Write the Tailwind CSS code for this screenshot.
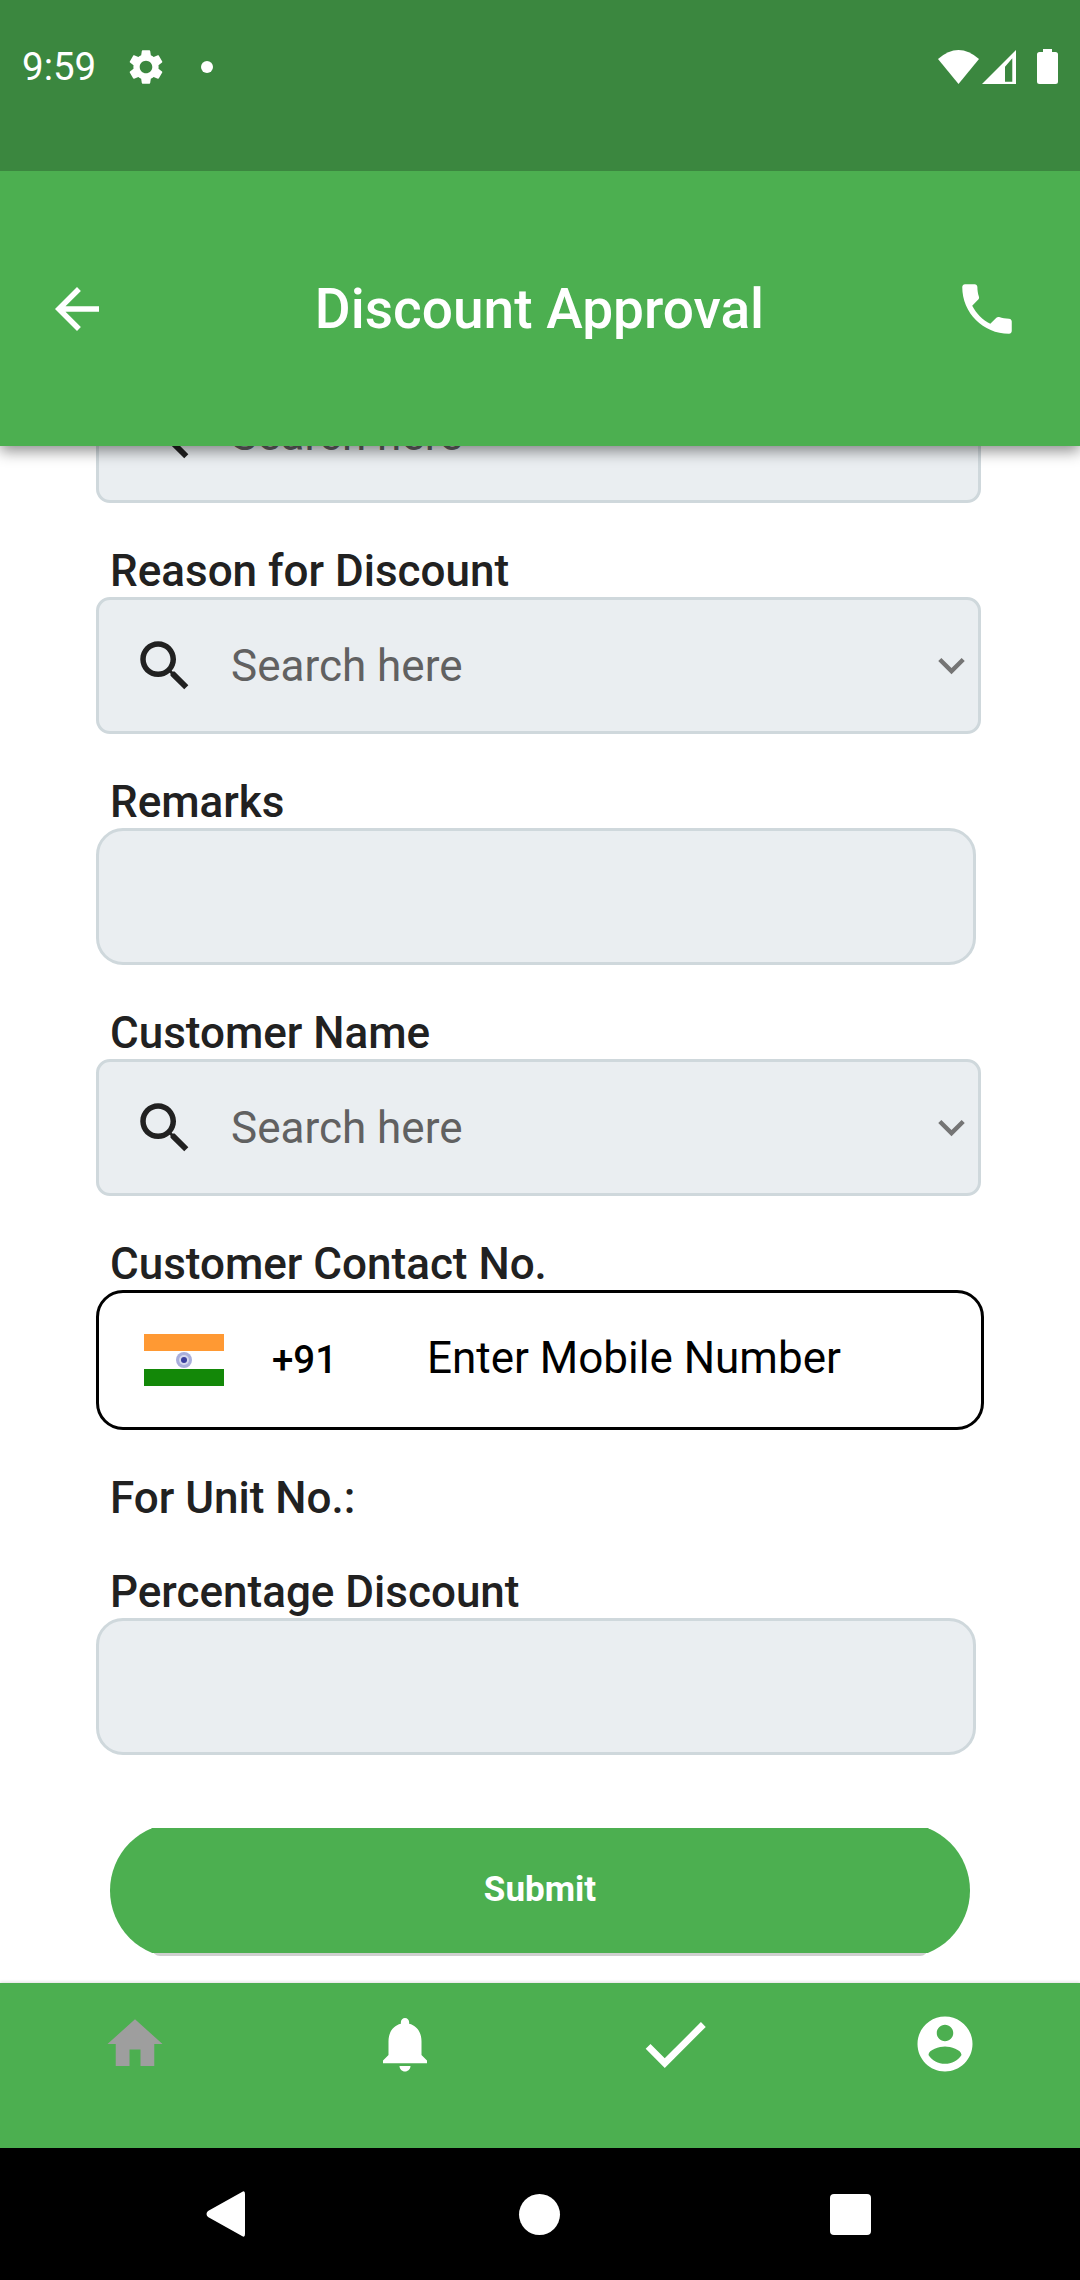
<!DOCTYPE html>
<html lang="en">
<head><meta charset="utf-8"/><title>Discount Approval</title><script src="https://cdn.jsdelivr.net/npm/@tailwindcss/browser@4"></script></head>
<body class="bg-white font-[family-name:Roboto,sans-serif]">
<div class="w-[1080px] h-[2280px] flex flex-col overflow-hidden">

<!-- status bar -->
<div class="h-[171px] shrink-0 bg-[#3b873f] text-white relative z-20 flex items-start pt-[49px]">
  <span class="ml-[22px] w-[96px] h-[36px] text-[38.5px] leading-[36px]">9:59</span>
  <svg class="ml-[7px] -mt-[3px] w-[42px] h-[42px]" viewBox="0 0 24 24" fill="#fff"><path d="M19.14 12.94c.04-.3.06-.61.06-.94 0-.32-.02-.64-.07-.94l2.03-1.58c.18-.14.23-.41.12-.61l-1.92-3.32c-.12-.22-.37-.29-.59-.22l-2.39.96c-.5-.38-1.03-.7-1.62-.94l-.36-2.54c-.04-.24-.24-.41-.48-.41h-3.84c-.24 0-.43.17-.47.41l-.36 2.54c-.59.24-1.13.57-1.62.94l-2.39-.96c-.22-.08-.47 0-.59.22L2.74 8.87c-.12.21-.08.47.12.61l2.03 1.58c-.05.3-.09.63-.09.94s.02.64.07.94l-2.03 1.58c-.18.14-.23.41-.12.61l1.92 3.32c.12.22.37.29.59.22l2.39-.96c.5.38 1.03.7 1.62.94l.36 2.54c.05.24.24.41.48.41h3.84c.24 0 .44-.17.47-.41l.36-2.54c.59-.24 1.13-.56 1.62-.94l2.39.96c.22.08.47 0 .59-.22l1.92-3.32c.12-.22.07-.47-.12-.61l-2.01-1.58zM12 15.6c-1.98 0-3.6-1.62-3.6-3.6s1.62-3.6 3.6-3.6 3.6 1.62 3.6 3.6-1.62 3.6-3.6 3.6z"/></svg>
  <span class="ml-[34px] mt-[12px] w-[12px] h-[12px] rounded-full bg-white"></span>
  <div class="ml-auto flex items-start pr-[22px] pt-px">
    <svg class="w-[41px] h-[34px]" viewBox="0 0 41 34" fill="#fff"><path d="M0 9Q20.5 -9 41 9L20.5 34Z"/></svg>
    <svg class="ml-[3px] w-[34px] h-[34px]" viewBox="0 0 34 34" fill="#fff"><path fill-rule="evenodd" d="M0 34L34 0V34ZM23 16.7V31.7H30.3V8.3Z"/></svg>
    <svg class="ml-[21px] w-[21px] h-[35px] -mt-px" viewBox="0 0 21 35" fill="#fff"><path d="M6 0H15V3H18.5Q21 3 21 5.5V32.5Q21 35 18.5 35H2.5Q0 35 0 32.5V5.5Q0 3 2.5 3H6Z"/></svg>
  </div>
</div>

<!-- app bar -->
<header class="h-[275px] shrink-0 bg-[#4caf50] text-white relative z-10 shadow-[0_5px_14px_rgba(0,0,0,0.45)] flex items-center pl-[44px] pr-[60px]">
  <svg class="w-[66px] h-[66px]" viewBox="0 0 24 24" fill="#fff"><path d="M20 11H7.83l5.59-5.59L12 4l-8 8 8 8 1.41-1.41L7.83 13H20v-2z"/></svg>
  <h1 class="flex-1 text-center pl-[15px] text-[55px] leading-[64px] font-medium">Discount Approval</h1>
  <svg class="w-[66px] h-[66px]" viewBox="0 0 24 24" fill="#fff"><path d="M6.62 10.79c1.44 2.83 3.76 5.14 6.59 6.59l2.2-2.2c.27-.27.67-.36 1.02-.24 1.12.37 2.33.57 3.57.57.55 0 1 .45 1 1V20c0 .55-.45 1-1 1-9.39 0-17-7.61-17-17 0-.55.45-1 1-1h3.5c.55 0 1 .45 1 1 0 1.25.2 2.45.57 3.57.11.35.03.74-.25 1.02l-2.2 2.2z"/></svg>
</header>

<!-- scrolled form -->
<main class="h-[1537px] shrink-0 overflow-hidden pl-[96px]">
  <div class="-mt-[80px] w-[885px] h-[137px] rounded-[14px] border-[3px] border-[#cfd8dc] bg-[#eaeef1] flex items-center text-[44px] text-[#616161]">
    <svg class="ml-[33px] w-[66px] h-[66px] text-[#212121]" viewBox="0 0 24 24" fill="currentColor"><path d="M15.5 14h-.79l-.28-.27C15.41 12.59 16 11.11 16 9.5 16 5.91 13.09 3 9.5 3S3 5.91 3 9.5 5.91 16 9.5 16c1.61 0 3.09-.59 4.23-1.57l.27.28v.79l5 4.99L20.49 19l-4.99-5zm-6 0C7.01 14 5 11.99 5 9.5S7.01 5 9.5 5 14 7.01 14 9.5 11.99 14 9.5 14z"/></svg>
    <span class="ml-[33px]">Search here</span>
  </div>

  <div class="h-[94px] pl-[14px] text-[44px] leading-[48px] font-medium text-[#212121] flex items-end pb-[2px]">Reason for Discount</div>
  <div class="w-[885px] h-[137px] rounded-[14px] border-[3px] border-[#cfd8dc] bg-[#eaeef1] flex items-center text-[44px] text-[#616161]">
    <svg class="ml-[33px] w-[66px] h-[66px] text-[#212121]" viewBox="0 0 24 24" fill="currentColor"><path d="M15.5 14h-.79l-.28-.27C15.41 12.59 16 11.11 16 9.5 16 5.91 13.09 3 9.5 3S3 5.91 3 9.5 5.91 16 9.5 16c1.61 0 3.09-.59 4.23-1.57l.27.28v.79l5 4.99L20.49 19l-4.99-5zm-6 0C7.01 14 5 11.99 5 9.5S7.01 5 9.5 5 14 7.01 14 9.5 11.99 14 9.5 14z"/></svg>
    <span class="ml-[33px]">Search here</span>
    <svg class="ml-auto w-[53px] h-[53px] text-[#757575]" viewBox="0 0 24 24" fill="currentColor"><path d="M16.59 8.59L12 13.17 7.41 8.59 6 10l6 6 6-6z"/></svg>
  </div>

  <div class="h-[94px] pl-[14px] text-[44px] leading-[48px] font-medium text-[#212121] flex items-end pb-[2px]">Remarks</div>
  <div class="w-[880px] h-[137px] rounded-[27px] border-[3px] border-[#cfd8dc] bg-[#eaeef1]"></div>

  <div class="h-[94px] pl-[14px] text-[44px] leading-[48px] font-medium text-[#212121] flex items-end pb-[2px]">Customer Name</div>
  <div class="w-[885px] h-[137px] rounded-[14px] border-[3px] border-[#cfd8dc] bg-[#eaeef1] flex items-center text-[44px] text-[#616161]">
    <svg class="ml-[33px] w-[66px] h-[66px] text-[#212121]" viewBox="0 0 24 24" fill="currentColor"><path d="M15.5 14h-.79l-.28-.27C15.41 12.59 16 11.11 16 9.5 16 5.91 13.09 3 9.5 3S3 5.91 3 9.5 5.91 16 9.5 16c1.61 0 3.09-.59 4.23-1.57l.27.28v.79l5 4.99L20.49 19l-4.99-5zm-6 0C7.01 14 5 11.99 5 9.5S7.01 5 9.5 5 14 7.01 14 9.5 11.99 14 9.5 14z"/></svg>
    <span class="ml-[33px]">Search here</span>
    <svg class="ml-auto w-[53px] h-[53px] text-[#757575]" viewBox="0 0 24 24" fill="currentColor"><path d="M16.59 8.59L12 13.17 7.41 8.59 6 10l6 6 6-6z"/></svg>
  </div>

  <div class="h-[94px] pl-[14px] text-[44px] leading-[48px] font-medium text-[#212121] flex items-end pb-[2px]">Customer Contact No.</div>
  <div class="w-[888px] h-[140px] rounded-[27px] border-[3px] border-black bg-white flex items-center text-black">
    <svg class="ml-[45px] w-[80px] h-[52px]" viewBox="0 0 80 52"><rect width="80" height="52" fill="#fff"/><rect width="80" height="17" fill="#ff9933"/><rect y="35" width="80" height="17" fill="#138808"/><circle cx="40" cy="26" r="8" fill="#a9aedb"/><circle cx="40" cy="26" r="5" fill="#d5d8ee"/><circle cx="40" cy="26" r="3" fill="#3a3f9e"/></svg>
    <span class="ml-[48px] w-[155px] text-[38.5px] font-medium leading-[48px]">+91</span>
    <span class="text-[44px] leading-[52px] -mt-[4px]">Enter Mobile Number</span>
  </div>

  <div class="h-[94px] pl-[14px] text-[44px] leading-[48px] font-medium text-[#212121] flex items-end pb-[2px]">For Unit No.:</div>
  <div class="h-[94px] pl-[14px] text-[44px] leading-[48px] font-medium text-[#212121] flex items-end pb-[2px]">Percentage Discount</div>
  <div class="w-[880px] h-[137px] rounded-[27px] border-[3px] border-[#cfd8dc] bg-[#eaeef1]"></div>

  <div class="relative mt-[73px] ml-[14px] w-[860px] h-[128px]">
    <div class="absolute left-[42px] right-[42px] bottom-0 h-[8px] rounded-b-[8px] bg-[#cfcfcf]"></div>
    <div class="relative h-[125px] overflow-hidden">
      <div class="-mt-[5px] h-[135px] rounded-full bg-[#4caf50] flex items-center justify-center text-white text-[35px] font-bold">Submit</div>
    </div>
  </div>
</main>

<!-- bottom tabs -->
<nav class="h-[165px] shrink-0 bg-[#4caf50] relative z-10 shadow-[0_-1px_3px_rgba(0,0,0,0.12)] grid grid-cols-4 justify-items-center items-start pt-[28px]">
  <svg class="w-[66px] h-[66px]" viewBox="0 0 24 24" fill="#9e9e9e"><path d="M10 20v-6h4v6h5v-8h3L12 3 2 12h3v8z"/></svg>
  <svg class="w-[66px] h-[66px]" viewBox="0 0 24 24" fill="#fff"><path d="M12 22c1.1 0 2-.9 2-2h-4c0 1.1.89 2 2 2zm6-6v-5c0-3.07-1.64-5.64-4.5-6.32V4c0-.83-.67-1.5-1.5-1.5s-1.5.67-1.5 1.5v.68C7.63 5.36 6 7.92 6 11v5l-2 2v1h16v-1l-2-2z"/></svg>
  <svg class="w-[82px] h-[82px] -mt-[8px]" viewBox="0 0 24 24" fill="#fff"><path d="M9 16.17L4.83 12l-1.41 1.41L9 19 21 7l-1.41-1.41z"/></svg>
  <svg class="w-[66px] h-[66px]" viewBox="0 0 24 24" fill="#fff"><path d="M12 2C6.48 2 2 6.48 2 12s4.48 10 10 10 10-4.48 10-10S17.52 2 12 2zm0 3c1.66 0 3 1.34 3 3s-1.34 3-3 3-3-1.34-3-3 1.34-3 3-3zm0 14.2c-2.5 0-4.71-1.28-6-3.22.03-1.99 4-3.08 6-3.08 1.99 0 5.97 1.09 6 3.08-1.29 1.94-3.5 3.22-6 3.22z"/></svg>
</nav>

<!-- android nav -->
<div class="h-[132px] shrink-0 bg-black relative">
  <div class="flex items-center h-full pl-[206px]">
    <svg class="w-[39px] h-[46px]" viewBox="0 0 39 46" fill="#fff"><path d="M36 1Q39 -1 39 3V43Q39 47 36 45L2 26Q-1 23 2 20Z"/></svg>
    <span class="ml-[274px] w-[41px] h-[41px] rounded-full bg-white"></span>
    <span class="ml-[270px] w-[41px] h-[41px] rounded-[4px] bg-white"></span>
  </div>
</div>
</div>
</body>
</html>
